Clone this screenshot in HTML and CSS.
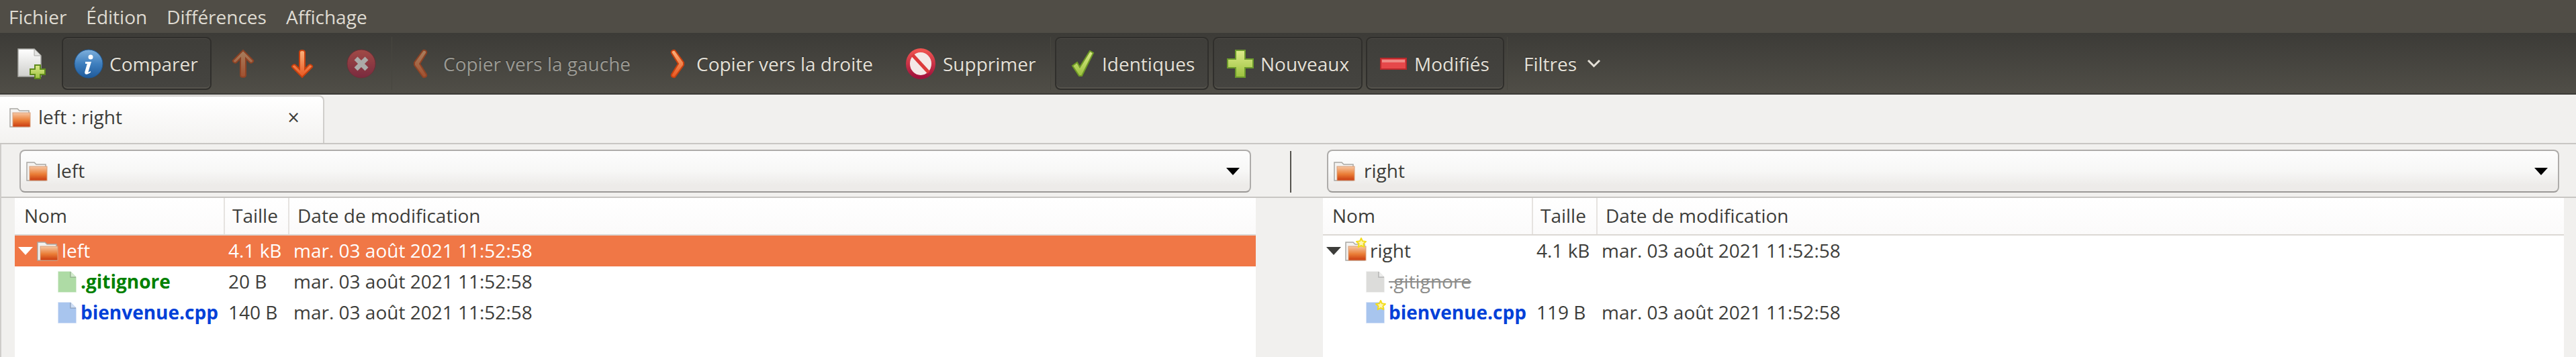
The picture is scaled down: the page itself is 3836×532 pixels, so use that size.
FILE: index.html
```html
<!DOCTYPE html>
<html lang="fr">
<head>
  <meta charset="UTF-8">
  <title>left : right</title>
  <link rel="stylesheet" href="styles.css">
</head>
<body>
  <svg class="sprites" width="0" height="0">
    <defs>
      <linearGradient id="orange" x1="0" y1="0" x2="0" y2="1">
        <stop offset="0" stop-color="#fbb27c"/>
        <stop offset="1" stop-color="#e9561f"/>
      </linearGradient>
      <linearGradient id="folderFront" x1="0" y1="0" x2="0" y2="1">
        <stop offset="0" stop-color="#f7c7a3"/>
        <stop offset="0.55" stop-color="#ea7d36"/>
        <stop offset="1" stop-color="#c93a10"/>
      </linearGradient>
      <linearGradient id="page" x1="0" y1="0" x2="0" y2="1">
        <stop offset="0" stop-color="#ffffff"/>
        <stop offset="1" stop-color="#cfcfcc"/>
      </linearGradient>
      <linearGradient id="blueBall" x1="0" y1="0" x2="0" y2="1">
        <stop offset="0" stop-color="#7fb0dc"/>
        <stop offset="0.5" stop-color="#3f7fbe"/>
        <stop offset="1" stop-color="#1f5a9a"/>
      </linearGradient>
      <linearGradient id="redBall" x1="0" y1="0" x2="0" y2="1">
        <stop offset="0" stop-color="#ef5350"/>
        <stop offset="1" stop-color="#a1123c"/>
      </linearGradient>
      <linearGradient id="green" x1="0" y1="0" x2="0" y2="1">
        <stop offset="0" stop-color="#dcea8a"/>
        <stop offset="1" stop-color="#9cc23e"/>
      </linearGradient>
      <symbol id="folder" viewBox="0 0 32 30">
        <path d="M1 29V2h11l3 3h14v24z" fill="#f4f3f1" stroke="#a9a8a4" stroke-width="1.5"/>
        <rect x="5" y="8" width="26" height="21" fill="url(#folderFront)" stroke="#d8a07c" stroke-width="1"/>
      </symbol>
      <symbol id="star" viewBox="0 0 16 16">
        <path d="M8 1l2 4.300 5 .6-3.600 3.300.9 5L8 11.800 3.700 14.200l.9-5L1 5.900l5-.6z" fill="#fdf6b0" stroke="#f3dc1e" stroke-width="2" stroke-linejoin="round"/>
      </symbol>
      <symbol id="file" viewBox="0 0 28 32">
        <path d="M1 1h18l8 8v22H1z" fill="currentColor" stroke="currentColor" stroke-width="1.500" stroke-opacity=".6"/>
        <path d="M19 1v8h8" fill="#fff" fill-opacity=".45" stroke="#000" stroke-opacity=".2" stroke-width="1.500"/>
      </symbol>
    </defs>
  </svg>

  <nav class="menubar">
    <span>Fichier</span>
    <span>Édition</span>
    <span>Différences</span>
    <span>Affichage</span>
  </nav>

  <div class="toolbar">
    <div class="tool tool-new">
      <svg width="42" height="46" viewBox="0 0 42 46">
        <path d="M1 1h24l10 10v31H1z" fill="url(#page)" stroke="#a8a8a4" stroke-width="1.500"/>
        <path d="M25 1v10h10" fill="#e4e4e2" stroke="#a8a8a4"/>
        <path d="M26 25h8v6h7v8h-7v6h-8v-6h-7v-8h7z" fill="url(#green)" stroke="#5f8a1e" stroke-width="2"/>
      </svg>
    </div>
    <div class="tool tool-btn tool-compare">
      <svg width="44" height="44" viewBox="0 0 44 44">
        <circle cx="22" cy="22" r="21" fill="url(#blueBall)" stroke="#1d5a99"/>
        <circle cx="25" cy="12" r="3.500" fill="#fff"/>
        <path d="M17 19h9l-4.500 15c-.3 1 .5 1 3-1l.8 1.500c-4 3.500-10 5-9-.5l3.500-12H17z" fill="#fff"/>
      </svg>
      <span>Comparer</span>
    </div>
    <div class="tool tool-icon tool-up dim">
      <svg width="36" height="44" viewBox="0 0 36 44">
        <path d="M18 2L33 17c1 2-3 5-5 3l-6-6v25c0 4-8 4-8 0V14l-6 6c-2 2-6-1-5-3z" fill="url(#orange)" stroke="#c8410f" stroke-width="2"/>
      </svg>
    </div>
    <div class="tool tool-icon">
      <svg width="36" height="44" viewBox="0 0 36 44">
        <path d="M18 42L33 27c1-2-3-5-5-3l-6 6V5c0-4-8-4-8 0v25l-6-6c-2-2-6 1-5 3z" fill="url(#orange)" stroke="#c8410f" stroke-width="2"/>
      </svg>
    </div>
    <div class="tool tool-icon dim">
      <svg width="44" height="44" viewBox="0 0 44 44">
        <circle cx="22" cy="22" r="21" fill="url(#redBall)" stroke="#8f1b2e"/>
        <path d="M14 14l16 16M30 14L14 30" stroke="#fff" stroke-width="7"/>
      </svg>
    </div>
    <div class="toolbar-sep"></div>
    <div class="tool tool-left off">
      <svg class="dim" width="23" height="44" viewBox="0 0 23 44">
        <path d="M15 2c3-1 6 1 5 4L10 22l10 16c1 3-2 5-5 4L2 24v-4z" fill="url(#orange)" stroke="#c8410f" stroke-width="2"/>
      </svg>
      <span>Copier vers la gauche</span>
    </div>
    <div class="tool tool-right">
      <svg width="23" height="44" viewBox="0 0 23 44">
        <path d="M8 2C5 1 2 3 3 6l10 16L3 38c-1 3 2 5 5 4l13-18v-4z" fill="url(#orange)" stroke="#c8410f" stroke-width="2"/>
      </svg>
      <span>Copier vers la droite</span>
    </div>
    <div class="tool tool-delete">
      <svg width="44" height="46" viewBox="0 0 44 46">
        <ellipse cx="22" cy="23" rx="19" ry="20" fill="#f4e9e7" stroke="url(#redBall)" stroke-width="6"/>
        <path d="M10 10l24 26" stroke="#dc3b3b" stroke-width="5"/>
      </svg>
      <span>Supprimer</span>
    </div>
    <div class="toolbar-sep sep-wide"></div>
    <div class="tool tool-btn tool-same">
      <svg width="36" height="40" viewBox="0 0 36 40">
        <path d="M2 23l7-5 4 7L28 1l5 3-17 34h-4z" fill="url(#green)" stroke="#6f9a27" stroke-width="2"/>
      </svg>
      <span>Identiques</span>
    </div>
    <div class="tool tool-btn tool-new-files">
      <svg width="40" height="42" viewBox="0 0 40 42">
        <path d="M13 1h14v13h12v13H27v14H13V27H1V14h12z" fill="url(#green)" stroke="#6c9a2c" stroke-width="2"/>
      </svg>
      <span>Nouveaux</span>
    </div>
    <div class="tool tool-btn tool-changed">
      <svg width="40" height="18" viewBox="0 0 40 18">
        <rect x="1" y="1" width="38" height="16" fill="#e6484a" stroke="#b8292c" stroke-width="2"/>
        <rect x="3" y="3" width="34" height="4" fill="#ee8b85"/>
      </svg>
      <span>Modifiés</span>
    </div>
    <div class="toolbar-sep sep-last"></div>
    <div class="tool tool-filters">
      <span>Filtres</span>
      <svg width="21" height="13" viewBox="0 0 21 13">
        <path d="M2 2l8.500 8.500L19 2" fill="none" stroke="#e4e0d8" stroke-width="3"/>
      </svg>
    </div>
  </div>

  <div class="tabbar">
    <div class="tab">
      <svg class="tab-icon" width="32" height="30"><use href="#folder"/></svg>
      <span class="tab-title">left : right</span>
      <span class="tab-close">×</span>
    </div>
  </div>

  <main class="compare">
    <div class="pathbar">
      <div class="combo">
        <svg width="32" height="30"><use href="#folder"/></svg>
        <span class="combo-text">left</span>
        <i class="combo-arrow"></i>
      </div>
      <div class="path-sep"></div>
      <div class="combo combo-right">
        <svg width="32" height="30"><use href="#folder"/></svg>
        <span class="combo-text">right</span>
        <i class="combo-arrow"></i>
      </div>
    </div>

    <div class="trees">
      <section class="tree">
        <div class="row head">
          <div class="col-name">Nom</div>
          <div class="col-size">Taille</div>
          <div class="col-date">Date de modification</div>
        </div>
        <div class="row selected">
          <div class="col-name">
            <i class="expander"></i>
            <svg class="icon-folder" width="32" height="30"><use href="#folder"/></svg>
            <span class="name">left</span>
          </div>
          <div class="col-size">4.1 kB</div>
          <div class="col-date">mar. 03 août 2021 11:52:58</div>
        </div>
        <div class="row">
          <div class="col-name child">
            <svg class="icon-file green" width="28" height="32"><use href="#file"/></svg>
            <span class="name name-new">.gitignore</span>
          </div>
          <div class="col-size">20 B</div>
          <div class="col-date">mar. 03 août 2021 11:52:58</div>
        </div>
        <div class="row">
          <div class="col-name child">
            <svg class="icon-file blue" width="28" height="32"><use href="#file"/></svg>
            <span class="name name-changed">bienvenue.cpp</span>
          </div>
          <div class="col-size">140 B</div>
          <div class="col-date">mar. 03 août 2021 11:52:58</div>
        </div>
      </section>

      <section class="tree">
        <div class="row head">
          <div class="col-name">Nom</div>
          <div class="col-size">Taille</div>
          <div class="col-date">Date de modification</div>
        </div>
        <div class="row">
          <div class="col-name">
            <i class="expander"></i>
            <span class="emblem-wrap">
              <svg class="icon-folder" width="32" height="30"><use href="#folder"/></svg>
              <svg class="emblem" width="16" height="16"><use href="#star"/></svg>
            </span>
            <span class="name">right</span>
          </div>
          <div class="col-size">4.1 kB</div>
          <div class="col-date">mar. 03 août 2021 11:52:58</div>
        </div>
        <div class="row">
          <div class="col-name child">
            <svg class="icon-file grey" width="28" height="32"><use href="#file"/></svg>
            <span class="name name-missing">.gitignore</span>
          </div>
          <div class="col-size"></div>
          <div class="col-date"></div>
        </div>
        <div class="row">
          <div class="col-name child">
            <span class="emblem-wrap">
              <svg class="icon-file blue" width="28" height="32"><use href="#file"/></svg>
              <svg class="emblem" width="16" height="16"><use href="#star"/></svg>
            </span>
            <span class="name name-changed">bienvenue.cpp</span>
          </div>
          <div class="col-size">119 B</div>
          <div class="col-date">mar. 03 août 2021 11:52:58</div>
        </div>
      </section>
    </div>
  </main>
</body>
</html>
```

FILE: styles.css
```css
* {
  box-sizing: border-box;
}

html,
body {
  margin: 0;
  height: 100%;
  overflow: hidden;
}

body {
  display: flex;
  flex-direction: column;
  font-family: "Open Sans", "Noto Sans", sans-serif;
  font-size: 28px;
  line-height: 36px;
  color: #3d3d3a;
  background-color: #f1f0ee;
}

.sprites {
  position: absolute;
}

svg {
  display: block;
  flex: none;
}

/* menu */
.menubar {
  display: flex;
  flex: none;
  align-items: center;
  gap: 29px;
  height: 49px;
  padding-left: 13px;
  color: #dfdbd2;
  background-color: #504d46;
}

/* toolbar */
.toolbar {
  display: flex;
  flex: none;
  align-items: stretch;
  height: 92px;
  padding: 6px 0 5px;
  color: #e4e0d8;
  background: linear-gradient(#3c3b37, #504e47);
  border-bottom: 2px solid #3c3b37;
  text-shadow: 0 -1px 1px #2a2926;
}

.tool {
  display: flex;
  align-items: center;
  flex: none;
  white-space: nowrap;
}

.tool-new {
  width: 92px;
  padding-left: 26px;
}

.tool-btn {
  background: linear-gradient(#3f3e3a, #454440);
  border: 2px solid #302f2c;
  border-radius: 8px;
  box-shadow: inset 0 1px 0 #4c4a45, inset 0 -2px 0 #55534c;
}

.tool-compare {
  width: 223px;
  gap: 9px;
  padding-left: 16px;
}

.tool-icon {
  justify-content: center;
  width: 88px;
}

.tool-up {
  margin-left: 3px;
}

.dim {
  opacity: 0.55;
}

.toolbar-sep {
  flex: none;
  width: 1px;
  margin-left: 1px;
  background-color: #47463f;
}

.tool-left {
  width: 390px;
  gap: 22px;
  padding-left: 31px;
}

.off span {
  color: #9b9a94;
}

.tool-right {
  width: 352px;
  gap: 17px;
  padding-left: 23px;
}

.tool-delete {
  width: 238px;
  gap: 11px;
  padding-left: 23px;
}

.sep-wide {
  margin: 0 6px 0 0;
}

.tool-same {
  width: 229px;
  gap: 10px;
  padding-left: 22px;
}

.tool-new-files {
  width: 223px;
  margin-left: 6px;
  gap: 10px;
  padding-left: 19px;
}

.tool-changed {
  width: 206px;
  margin-left: 5px;
  gap: 11px;
  padding-left: 19px;
}

.sep-last {
  margin-left: 4px;
}

.tool-filters {
  gap: 15px;
  padding-left: 24px;
}

/* tabs */
.tabbar {
  display: flex;
  flex: none;
  height: 74px;
  padding-top: 1px;
  border-bottom: 2px solid #c8c6c3;
}

.tab {
  display: flex;
  align-items: center;
  width: 483px;
  height: 71px;
  padding: 0 34px 8px 14px;
  background: linear-gradient(#ffffff, #f3f2f0);
  border: 2px solid #d0cecb;
  border-width: 2px 2px 0 0;
  border-radius: 0 8px 0 0;
}

.tab-title {
  flex: 1;
  margin-left: 11px;
  padding-bottom: 2px;
}

.tab-close {
  font-family: "DejaVu Sans", sans-serif;
  font-size: 24px;
}

/* location row */
.compare {
  display: flex;
  flex-direction: column;
  flex: 1;
  min-height: 0;
  border-left: 2px solid #cfcdca;
}

.pathbar {
  display: flex;
  flex: none;
  height: 80px;
  padding: 8px 25px 6px 27px;
  border-bottom: 2px solid #c8c6c3;
}

.combo {
  display: flex;
  align-items: center;
  width: 1834px;
  height: 64px;
  padding: 0 15px 0 8px;
  background: linear-gradient(#fdfdfd 0, #f7f7f6 50%, #edebe9 85%);
  border: 2px solid #aeacaa;
  border-bottom-color: #9b9997;
  border-radius: 8px;
}

.combo-text {
  flex: 1;
  margin-left: 13px;
  padding-bottom: 2px;
}

.combo-arrow {
  width: 0;
  height: 0;
  border-style: solid;
  border-width: 11px 10px 0;
  border-color: #000 transparent transparent;
}

.path-sep {
  flex: none;
  width: 2px;
  height: 62px;
  margin: 2px 53px 0 58px;
  background-color: #55534e;
}

.combo-right {
  width: 1835px;
}

/* file trees */
.trees {
  display: flex;
  flex: 1;
  gap: 100px;
  padding-left: 20px;
}

.tree {
  width: 1848px;
  background-color: #fff;
}

.row {
  display: flex;
  align-items: center;
  height: 46px;
}

.col-name {
  display: flex;
  align-items: center;
  flex: none;
  width: 311px;
  padding-left: 5px;
  white-space: nowrap;
}

.name {
  padding-bottom: 3px;
}

.col-size {
  flex: none;
  width: 96px;
  padding: 0 0 3px 7px;
  white-space: nowrap;
}

.col-date {
  flex: 1;
  padding: 0 0 3px 8px;
}

.head {
  height: 56px;
  align-items: stretch;
  background: linear-gradient(#ffffff, #fbfafa);
  border-bottom: 2px solid #dcd8d4;
}

.head > div {
  display: flex;
  align-items: center;
  padding-left: 14px;
  padding-bottom: 3px;
}

.head .col-size,
.head .col-date {
  border-left: 2px solid #e6e3e0;
}

.head .col-size {
  padding-left: 11px;
}

.head .col-date {
  padding-left: 12px;
}

.selected {
  color: #fff;
  background-color: #f07746;
}

.expander {
  flex: none;
  width: 0;
  height: 0;
  border-style: solid;
  border-width: 12px 11px 0;
  border-color: #3d3d3a transparent transparent;
}

.selected .expander {
  border-top-color: #fff;
}

.icon-folder {
  margin: 0 5px 0 6px;
}

.emblem-wrap {
  position: relative;
  flex: none;
}

.emblem {
  position: absolute;
  top: -5px;
  right: 5px;
}

.child {
  padding-left: 64px;
}

.child .emblem {
  top: -3px;
  right: 4px;
}

.icon-file {
  margin-right: 6px;
}

.green {
  color: #aedba5;
}

.blue {
  color: #a8c5ee;
}

.grey {
  color: #dcdcda;
}

.name-new {
  font-weight: 700;
  color: #008000;
}

.name-changed {
  font-weight: 700;
  color: #0040d8;
}

.name-missing {
  color: #8c8c8a;
  text-decoration: line-through;
}
```
